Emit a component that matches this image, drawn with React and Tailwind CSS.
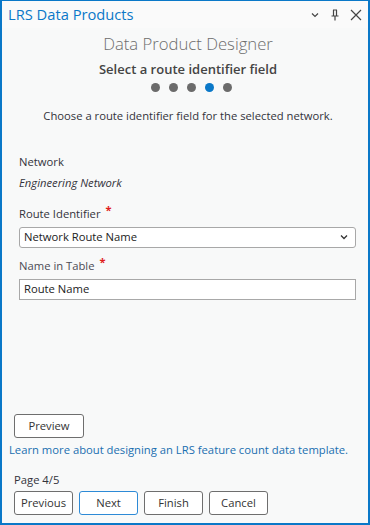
import React from "react";

const font = { fontFamily: '"Open Sans", "Noto Sans", sans-serif' };

const Dots = ({ total, active }) => (
  <div className="flex justify-center gap-[9px] mt-[5px] ml-[6px]">
    {Array.from({ length: total }).map((_, i) => (
      <span
        key={i}
        className={`w-[9px] h-[9px] rounded-full ${
          i === active ? "bg-[#0a78c8]" : "bg-[#6b6b6b]"
        }`}
      />
    ))}
  </div>
);

const Required = () => (
  <span className="text-[#e0201b] font-bold text-[11px] ml-[5px] relative -top-[4px]">*</span>
);

const Btn = ({ children, primary }) => (
  <button
    className={`h-[24px] w-[59px] rounded-[3px] bg-white text-[11.25px] text-[#333] border ${
      primary ? "border-[#2d8ad6]" : "border-[#6e6e6e]"
    }`}
  >
    {children}
  </button>
);

export default function App() {
  return (
    <div
      className="w-[370px] h-[525px] flex flex-col bg-[#f8f9f9] border-[#0a78c8] border-t border-x-2 border-b-2 text-[#33333b] text-[11.25px]"
      style={font}
    >
      {/* title bar */}
      <div className="flex items-center justify-between pl-[6px] pr-[6px] h-[27px] bg-[#fafafa]">
        <span className="text-[14.7px] text-[#0a78c8]">LRS Data Products</span>
        <div className="flex items-center gap-[10px] text-[#444]">
          <svg width="10" height="10" viewBox="0 0 10 10" fill="none" stroke="currentColor" strokeWidth="1.2">
            <path d="M2 3.5 L5 6.5 L8 3.5" />
          </svg>
          <svg width="10" height="12" viewBox="0 0 10 12" fill="none" stroke="currentColor" strokeWidth="1.2">
            <path d="M3 1 H7 M3.5 1 V6.5 M6.5 1 V6.5 M1.5 7 H8.5 M5 7 V11.5" />
          </svg>
          <svg width="12" height="12" viewBox="0 0 12 12" fill="none" stroke="currentColor" strokeWidth="1.2">
            <path d="M1 1 L11 11 M11 1 L1 11" />
          </svg>
        </div>
      </div>

      {/* header */}
      <div className="flex flex-col items-center pl-[6px]">
        <div className="text-[16.7px] font-light text-[#6d6d6d] mt-[4px] leading-[24px]">
          Data Product Designer
        </div>
        <div className="text-[13px] font-semibold text-[#444] mt-[4px] leading-[18px]">
          Select a route identifier field
        </div>
        <Dots total={5} active={3} />
        <div className="mt-[16px]">Choose a route identifier field for the selected network.</div>
      </div>

      {/* form */}
      <div className="flex flex-col pl-[17px] pr-[12px] mt-[28px]">
        <div className="leading-[18px]">Network</div>
        <div className="italic mt-[3px] leading-[18px]">Engineering Network</div>

        <div className="mt-[13px] leading-[18px]">
          Route Identifier
          <Required />
        </div>
        <div className="mt-[4px] h-[21px] flex items-center justify-between bg-white border border-[#a8a8a8] rounded-[3px] pl-[4px] pr-[6px] text-[#222]">
          <span>Network Route Name</span>
          <svg width="10" height="10" viewBox="0 0 10 10" fill="none" stroke="#333" strokeWidth="1.3">
            <path d="M2 3.5 L5 6.5 L8 3.5" />
          </svg>
        </div>

        <div className="mt-[9px] leading-[18px] text-[#4b4b55]">
          Name in Table
          <Required />
        </div>
        <div className="mt-[4px] h-[21px] flex items-center bg-white border border-[#a8a8a8] pl-[4px] text-[#222]">
          Route Name
        </div>
      </div>

      <div className="flex-1" />

      {/* footer */}
      <div className="flex flex-col pb-[8px]">
        <div className="px-[12px]">
          <button className="h-[24px] w-[70px] rounded-[3px] bg-white border border-[#6e6e6e] text-[11.25px] text-[#333]">
            Preview
          </button>
        </div>
        <a className="mt-[3px] pl-[7px] text-[#1a6fb0] leading-[18px]">
          Learn more about designing an LRS feature count data template.
        </a>
        <div className="mt-[12px] px-[12px] leading-[18px]">Page 4/5</div>
        <div className="flex gap-[6px] px-[12px] mt-[2px]">
          <Btn>Previous</Btn>
          <Btn primary>Next</Btn>
          <Btn>Finish</Btn>
          <Btn>Cancel</Btn>
        </div>
      </div>
    </div>
  );
}
